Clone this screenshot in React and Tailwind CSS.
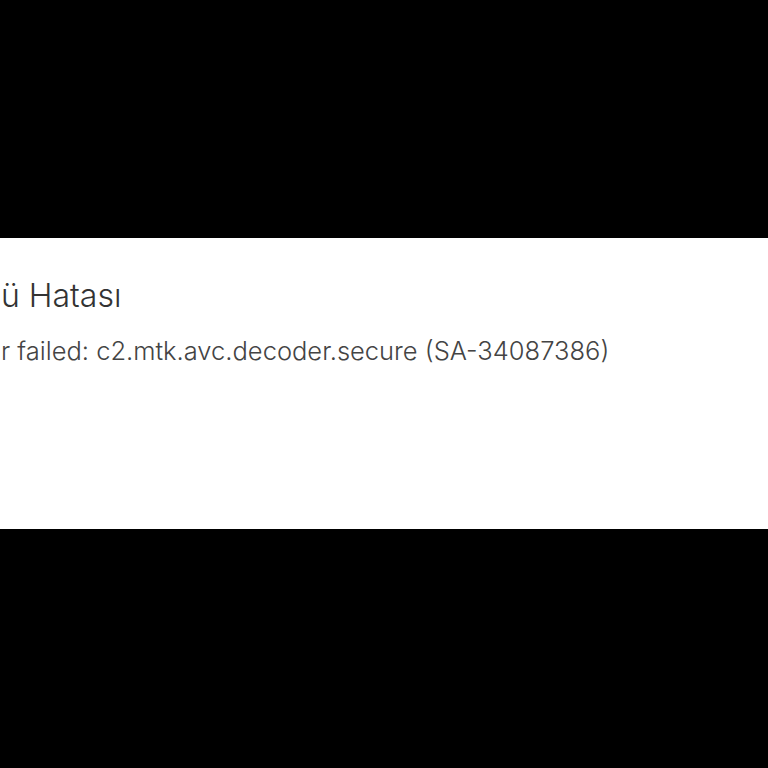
import React from 'react';

export default function App() {
  return (
    <div className="w-[768px] h-[768px] bg-black flex flex-col" style={{ fontFamily: 'Inter, "Noto Sans", sans-serif' }}>
      <div className="h-[238px]" />
      <div className="h-[291px] bg-white pt-[38px] pl-[1px]">
        <div className="text-[32px] leading-[40px] font-light text-[#333] whitespace-nowrap">ü Hatası</div>
        <div className="mt-[19px] text-[25.5px] leading-[32px] font-light text-[#444] whitespace-nowrap">
          r failed: c2.mtk.avc.decoder.secure (SA-34087386)
        </div>
      </div>
      <div className="flex-1" />
    </div>
  );
}
